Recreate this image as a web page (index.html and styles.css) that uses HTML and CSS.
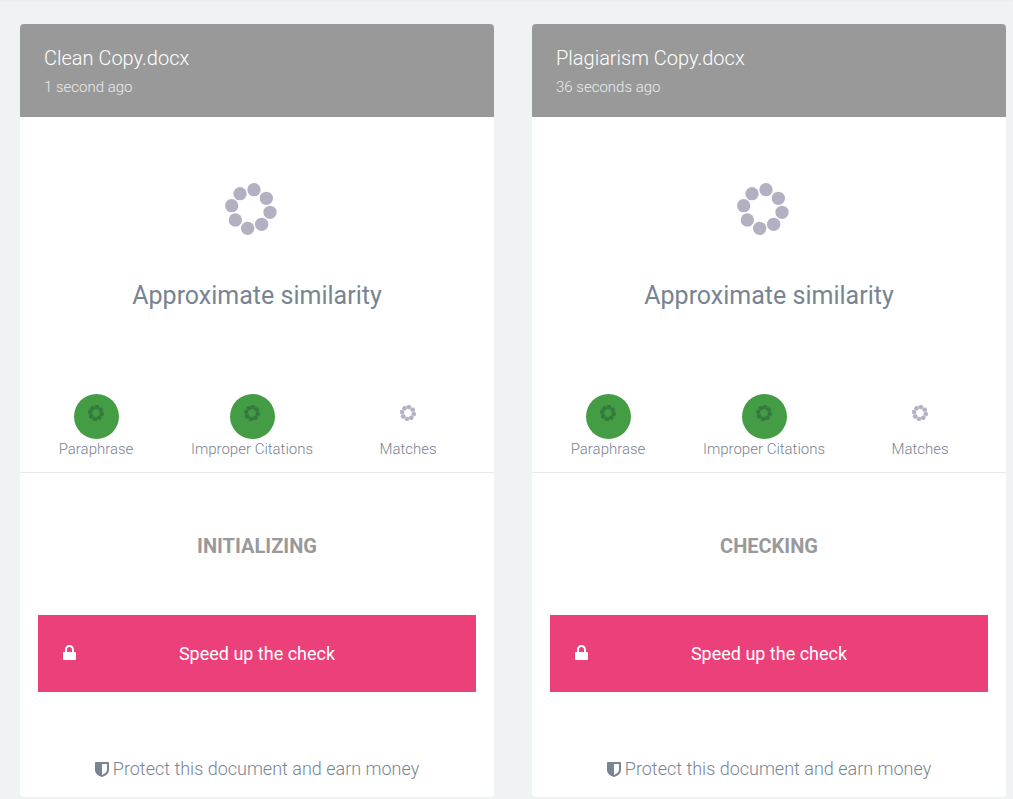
FILE: index.html
```html
<!DOCTYPE html>
<html lang="en">
<head>
<meta charset="utf-8">
<meta name="viewport" content="width=device-width, initial-scale=1">
<title>Documents</title>
<link rel="stylesheet" href="styles.css">
</head>
<body>
<svg class="symbols" aria-hidden="true">
  <symbol id="spinner" viewBox="0 0 156 156">
    <circle cx="87" cy="20" r="20"/><circle cx="124" cy="46" r="20"/><circle cx="135" cy="88" r="20"/><circle cx="110" cy="124" r="20"/><circle cx="68" cy="136" r="20"/><circle cx="31" cy="111" r="20"/><circle cx="20" cy="68" r="20"/><circle cx="45" cy="32" r="20"/>
  </symbol>
  <symbol id="lock" viewBox="0 0 13 15">
    <path fill-rule="evenodd" d="M1 7h1V4.500a4.500 4.500 0 0 1 9 0V7h1a1 1 0 0 1 1 1v6a1 1 0 0 1-1 1H1a1 1 0 0 1-1-1V8a1 1 0 0 1 1-1zm3 0h5V4.500a2.500 2.500 0 0 0-5 0z"/>
  </symbol>
  <symbol id="shield" viewBox="0 0 14 15">
    <path fill-rule="evenodd" d="M1 0h12a1 1 0 0 1 1 1v7c0 3.500-3.500 6-7 7C3.500 14 0 11.500 0 8V1a1 1 0 0 1 1-1zm6 2v11c2.500-1.300 5-3 5-5V2z"/>
  </symbol>
</svg>
<main class="board">
  <article class="card">
    <header class="card-head">
      <h2 class="name">Clean Copy.docx</h2>
      <p class="time">1 second ago</p>
    </header>
    <section class="summary">
      <svg class="spinner-large"><use href="#spinner"/></svg>
      <h3 class="similarity">Approximate similarity</h3>
    </section>
    <ul class="stats">
      <li class="stat"><span class="dot dot-green"><svg class="spinner-small"><use href="#spinner"/></svg></span>Paraphrase</li>
      <li class="stat"><span class="dot dot-green"><svg class="spinner-small"><use href="#spinner"/></svg></span>Improper Citations</li>
      <li class="stat"><span class="dot"><svg class="spinner-small"><use href="#spinner"/></svg></span>Matches</li>
    </ul>
    <section class="progress">
      <p class="status">INITIALIZING</p>
      <button class="speed" type="button"><svg class="lock"><use href="#lock"/></svg><span class="speed-text">Speed up the check</span></button>
      <a class="protect" href="#protect"><svg class="shield"><use href="#shield"/></svg>Protect this document and earn money</a>
    </section>
  </article>
  <article class="card">
    <header class="card-head">
      <h2 class="name">Plagiarism Copy.docx</h2>
      <p class="time">36 seconds ago</p>
    </header>
    <section class="summary">
      <svg class="spinner-large"><use href="#spinner"/></svg>
      <h3 class="similarity">Approximate similarity</h3>
    </section>
    <ul class="stats">
      <li class="stat"><span class="dot dot-green"><svg class="spinner-small"><use href="#spinner"/></svg></span>Paraphrase</li>
      <li class="stat"><span class="dot dot-green"><svg class="spinner-small"><use href="#spinner"/></svg></span>Improper Citations</li>
      <li class="stat"><span class="dot"><svg class="spinner-small"><use href="#spinner"/></svg></span>Matches</li>
    </ul>
    <section class="progress">
      <p class="status">CHECKING</p>
      <button class="speed" type="button"><svg class="lock"><use href="#lock"/></svg><span class="speed-text">Speed up the check</span></button>
      <a class="protect" href="#protect"><svg class="shield"><use href="#shield"/></svg>Protect this document and earn money</a>
    </section>
  </article>
</main>
</body>
</html>
```
FILE: styles.css
```css
* { box-sizing: border-box; }
body {
  margin: 0;
  background: #eff3f4;
  color: #778492;
  font-family: Roboto, sans-serif;
  font-weight: 300;
}
h2, h3, p, ul { margin: 0; padding: 0; }
.symbols { display: none; }
.board {
  display: grid;
  grid-template-columns: 1fr 1fr;
  gap: 38px;
  padding: 24px 7px 2px 20px;
  box-shadow: inset 0 2px 2px -1px #e8ecee;
}
.card {
  display: flex;
  flex-direction: column;
  background: #fff;
  border-radius: 4px;
  overflow: hidden;
}
.card-head {
  padding: 22px 24px 19px;
  background: #999;
  color: #fff;
}
.name { font-size: 20px; font-weight: 300; line-height: 25px; }
.time { margin-top: 5px; font-size: 15px; line-height: 22px; color: #ebebeb; }
.summary {
  display: flex;
  flex-direction: column;
  align-items: center;
  padding-top: 66px;
}
.spinner-large { width: 52px; height: 52px; margin-right: 13px; fill: #b3b1c1; }
.similarity { margin-top: 45px; font-size: 25px; font-weight: 400; line-height: 32px; }
.stats {
  display: grid;
  grid-template-columns: repeat(3, 1fr);
  margin: 82px 8px 0 -2px;
  padding-bottom: 13px;
  list-style: none;
}
.stat {
  display: flex;
  flex-direction: column;
  align-items: center;
  font-size: 15px;
  line-height: 20px;
  white-space: nowrap;
}
.dot {
  display: flex;
  justify-content: center;
  width: 45px;
  height: 45px;
  padding-top: 11px;
  border-radius: 50%;
  fill: #b3b1c1;
  stroke: #b3b1c1;
}
.dot-green { background: #449d44; fill: #34793f; stroke: #34793f; }
.spinner-small { width: 16px; height: 16px; stroke-width: 6px; }
.progress {
  display: flex;
  flex-direction: column;
  align-items: center;
  padding: 60px 18px 16px;
  border-top: 1px solid #eaeaea;
}
.status { font-size: 20px; font-weight: 700; line-height: 26px; color: #999; }
.speed {
  display: grid;
  grid-template-columns: 13px 1fr 13px;
  align-items: center;
  width: 100%;
  height: 77px;
  margin-top: 56px;
  padding: 0 25px;
  border: 0;
  background: #ec407a;
  color: #fff;
  font-family: inherit;
  font-size: 18px;
  font-weight: 400;
}
.lock { width: 13px; height: 15px; margin-bottom: 3px; fill: #fff; }
.protect {
  display: flex;
  align-items: center;
  gap: 4px;
  margin-top: 65px;
  color: inherit;
  font-size: 18px;
  line-height: 24px;
  text-decoration: none;
}
.shield { width: 14px; height: 15px; fill: #778492; }
```
